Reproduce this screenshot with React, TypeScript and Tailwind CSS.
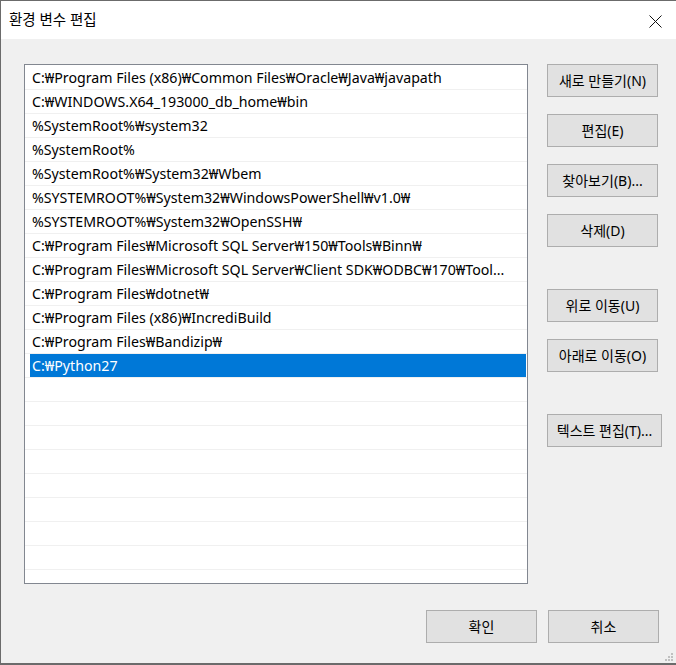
const paths = [
  "C:₩Program Files (x86)₩Common Files₩Oracle₩Java₩javapath",
  "C:₩WINDOWS.X64_193000_db_home₩bin",
  "%SystemRoot%₩system32",
  "%SystemRoot%",
  "%SystemRoot%₩System32₩Wbem",
  "%SYSTEMROOT%₩System32₩WindowsPowerShell₩v1.0₩",
  "%SYSTEMROOT%₩System32₩OpenSSH₩",
  "C:₩Program Files₩Microsoft SQL Server₩150₩Tools₩Binn₩",
  "C:₩Program Files₩Microsoft SQL Server₩Client SDK₩ODBC₩170₩Tool...",
  "C:₩Program Files₩dotnet₩",
  "C:₩Program Files (x86)₩IncrediBuild",
  "C:₩Program Files₩Bandizip₩",
  "C:₩Python27",
];

const SELECTED = 12;
const TOTAL_ROWS = 22;

function Button({ label, className = "" }: { label: string; className?: string }) {
  return (
    <button
      className={`flex h-[33px] items-center justify-center border border-[#adadad] bg-[#e1e1e1] text-[14px] text-black ${className}`}
    >
      {label}
    </button>
  );
}

export default function App() {
  const rows = Array.from({ length: TOTAL_ROWS }, (_, i) => paths[i] ?? "");

  return (
    <div className="flex h-[665px] w-[676px] flex-col overflow-hidden border-b-2 border-l border-t border-[#6b6b6b] bg-[#f0f0f0] font-['Noto_Sans','Noto_Sans_CJK_KR',sans-serif] text-black">
      {/* title bar */}
      <div className="flex h-[38px] shrink-0 items-center justify-between bg-white pl-[8px] pr-[14px]">
        <span className="text-[14.5px]">환경 변수 편집</span>
        <svg width="13" height="13" viewBox="0 0 13 13" className="mt-[2px]">
          <path d="M0.5 0.5 L12.5 12.5 M12.5 0.5 L0.5 12.5" stroke="#111" strokeWidth="1" />
        </svg>
      </div>

      <div className="flex flex-1 flex-col pl-[23px] pt-[25px]">
        <div className="flex gap-[19px]">
          {/* list box */}
          <div className="h-[520px] w-[504px] overflow-hidden border border-[#828790] bg-white pt-[1px]">
            {rows.map((p, i) => (
              <div key={i} className="h-[24px] border-b border-[#f0f0f0]">
                {i === SELECTED ? (
                  <div className="ml-[5px] mr-[1px] h-[23px] bg-[#0078d7] pl-[2px] text-[14.2px] leading-[23px] text-white">
                    {p}
                  </div>
                ) : (
                  <div className="whitespace-nowrap pl-[7px] text-[14.2px] leading-[23px]">{p}</div>
                )}
              </div>
            ))}
          </div>

          {/* right-side buttons */}
          <div className="flex flex-col">
            <Button label="새로 만들기(N)" className="w-[111px]" />
            <Button label="편집(E)" className="mt-[17px] w-[111px]" />
            <Button label="찾아보기(B)..." className="mt-[17px] w-[111px]" />
            <Button label="삭제(D)" className="mt-[17px] w-[111px]" />
            <Button label="위로 이동(U)" className="mt-[42px] w-[111px]" />
            <Button label="아래로 이동(O)" className="mt-[17px] w-[111px]" />
            <Button label="텍스트 편집(T)..." className="mt-[42px] w-[115px]" />
          </div>
        </div>

        {/* bottom buttons */}
        <div className="mt-[26px] flex justify-end gap-[11px] pr-[17px]">
          <Button label="확인" className="w-[111px]" />
          <Button label="취소" className="w-[111px]" />
        </div>
        <div className="mt-auto flex justify-end pb-[1px] pr-[2px]">
          <svg width="10" height="10" viewBox="0 0 10 10">
            <rect x="7" y="1" width="2" height="2" fill="#c0c0c0" />
            <rect x="4" y="4" width="2" height="2" fill="#c0c0c0" />
            <rect x="7" y="4" width="2" height="2" fill="#c0c0c0" />
            <rect x="1" y="7" width="2" height="2" fill="#c0c0c0" />
            <rect x="4" y="7" width="2" height="2" fill="#c0c0c0" />
            <rect x="7" y="7" width="2" height="2" fill="#c0c0c0" />
          </svg>
        </div>
      </div>
    </div>
  );
}
